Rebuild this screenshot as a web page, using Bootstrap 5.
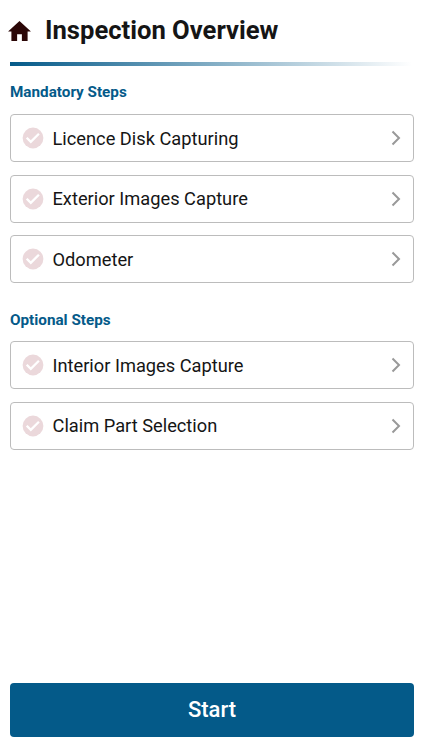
<!DOCTYPE html>
<html lang="en">
<head>
<meta charset="utf-8">
<meta name="viewport" content="width=device-width, initial-scale=1">
<title>Inspection Overview</title>
<link href="https://cdn.jsdelivr.net/npm/bootstrap@5.3.0/dist/css/bootstrap.min.css" rel="stylesheet">
<style>
body{font-family:Roboto,"Liberation Sans",sans-serif;height:750px;color:#151515;background:#fff;line-height:1}
.page-head{height:62px;padding:0 0 1px 7.500px;gap:14.500px}
.page-title{font-size:25.6px;font-weight:700}
.rule{height:4px;margin:0 10px;background:linear-gradient(90deg,#045a89,#fff)}
.section-title{font-size:15.25px;font-weight:700;color:#045a89;height:48px;padding:4px 10px 0}
.optional{height:58px;padding-top:17px}
.steps{padding:0 8px 0 10px;gap:12.5px}
.step{height:48px;border:1px solid #bcbcbc;border-radius:4px;padding:0 12px 0 11px;font-size:18.25px;color:#151515;background:#fff}
.step span{padding-top:1.500px}
.step svg:first-child{margin-right:8.500px}
.start{height:54px;margin:0 8px 13px 10px;padding-bottom:8px;background:#045a89;border:0;border-radius:4px;color:#fff;font-size:22px;font-weight:500}
</style>
</head>
<body class="d-flex flex-column overflow-hidden">
<svg class="d-none"><defs>
<symbol id="check" viewBox="0 0 22 22"><circle cx="11" cy="11" r="10.4" fill="#ebd8db"/><path d="M4.700 10.700l4.100 4.100 8.100-8.100" fill="none" stroke="#fff" stroke-width="2.300"/></symbol>
<symbol id="chevron" viewBox="0 0 10 16"><path d="M1.500 1.500L8 8l-6.500 6.500" fill="none" stroke="#999" stroke-width="2"/></symbol>
</defs></svg>
<header class="page-head d-flex align-items-center">
<svg width="23" height="20" viewBox="0 0 24 21"><path d="M12 0L0 11h3.500v10h6v-7h5v7h6V11H24z" fill="#2b0707"/></svg>
<h1 class="page-title m-0"><span>Inspection Overview</span></h1>
</header>
<div class="rule"></div>
<main class="flex-grow-1">
<h2 class="section-title d-flex align-items-center m-0"><span>Mandatory Steps</span></h2>
<div class="steps d-flex flex-column">
<a class="step d-flex align-items-center text-decoration-none" href="#"><svg width="22" height="22"><use href="#check"/></svg><span>Licence Disk Capturing</span><svg class="ms-auto" width="10" height="16"><use href="#chevron"/></svg></a>
<a class="step d-flex align-items-center text-decoration-none" href="#"><svg width="22" height="22"><use href="#check"/></svg><span>Exterior Images Capture</span><svg class="ms-auto" width="10" height="16"><use href="#chevron"/></svg></a>
<a class="step d-flex align-items-center text-decoration-none" href="#"><svg width="22" height="22"><use href="#check"/></svg><span>Odometer</span><svg class="ms-auto" width="10" height="16"><use href="#chevron"/></svg></a>
</div>
<h2 class="section-title optional d-flex align-items-center m-0"><span>Optional Steps</span></h2>
<div class="steps d-flex flex-column">
<a class="step d-flex align-items-center text-decoration-none" href="#"><svg width="22" height="22"><use href="#check"/></svg><span>Interior Images Capture</span><svg class="ms-auto" width="10" height="16"><use href="#chevron"/></svg></a>
<a class="step d-flex align-items-center text-decoration-none" href="#"><svg width="22" height="22"><use href="#check"/></svg><span>Claim Part Selection</span><svg class="ms-auto" width="10" height="16"><use href="#chevron"/></svg></a>
</div>
</main>
<button class="start btn d-flex align-items-center justify-content-center" type="button">Start</button>
<script src="https://cdn.jsdelivr.net/npm/bootstrap@5.3.0/dist/js/bootstrap.bundle.min.js"></script>
</body>
</html>
